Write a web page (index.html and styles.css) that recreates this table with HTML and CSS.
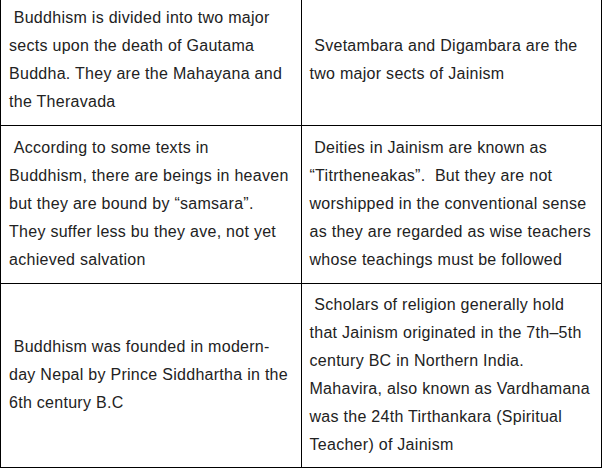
FILE: index.html
```html
<!DOCTYPE html>
<html>
<head>
<meta charset="utf-8">
<link rel="stylesheet" href="styles.css">
</head>
<body>
<table class="compare">
  <tr>
    <td>&nbsp;Buddhism is divided into two major sects upon the death of Gautama Buddha. They are the Mahayana and the Theravada</td>
    <td>&nbsp;Svetambara and Digambara are the two major sects of Jainism</td>
  </tr>
  <tr>
    <td>&nbsp;According to some texts in<br>Buddhism, there are beings in heaven but they are bound by “samsara”. They suffer less bu they ave, not yet achieved salvation</td>
    <td>&nbsp;Deities in Jainism are known as “Titrtheneakas”.&nbsp; But they are not worshipped in the conventional sense as they are regarded as wise teachers whose teachings must be followed</td>
  </tr>
  <tr>
    <td>&nbsp;Buddhism was founded in modern-day Nepal by Prince Siddhartha in the 6th century B.C</td>
    <td>&nbsp;Scholars of religion generally hold that Jainism originated in the 7th–5th century BC in Northern India. Mahavira, also known as Vardhamana was the 24th Tirthankara (Spiritual Teacher) of Jainism</td>
  </tr>
</table>
</body>
</html>
```

FILE: styles.css
```css
html, body {
  margin: 0;
  padding: 0;
  background: #fff;
}

body {
  font-family: "Liberation Sans", Arial, sans-serif;
  font-size: 16px;
  letter-spacing: 0.28px;
  line-height: 28px;
  color: #222;
  overflow: hidden;
}

.compare {
  border-collapse: collapse;
  width: 602px;
  margin-top: -5px;
  table-layout: fixed;
}

.compare td {
  border: 1px solid #000;
  padding: 8px 8px 9px;
  vertical-align: middle;
  width: 50%;
}

.compare tr:last-child td {
  padding: 7px 8px 8px;
}
```
